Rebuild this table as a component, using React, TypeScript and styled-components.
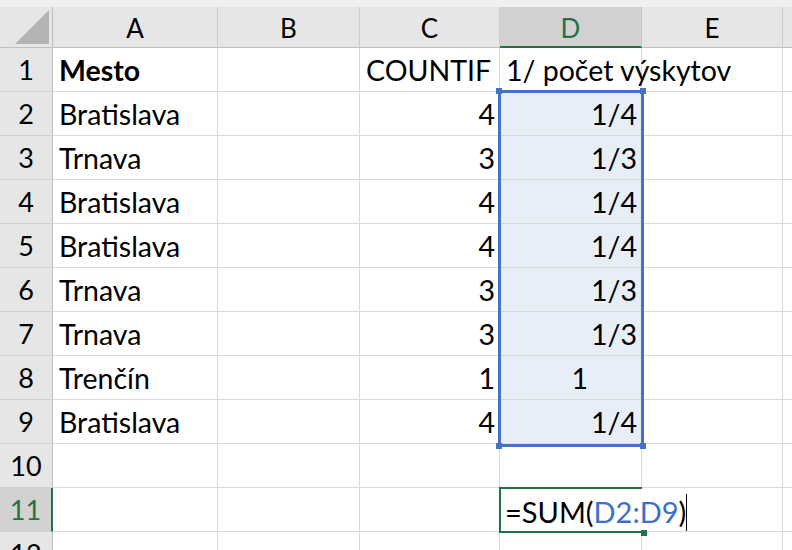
import styled, { createGlobalStyle } from "styled-components";

const GlobalStyle = createGlobalStyle`
  html, body {
    margin: 0;
    padding: 0;
    background: #ffffff;
    overflow: hidden;
  }
  body {
    font-family: Lato, "Open Sans", "Liberation Sans", sans-serif;
  }
`;

const GRID = "#d9d9d9";
const HEAD = "#e6e6e6";
const HEAD_LINE = "#bfbfbf";
const GREEN = "#217346";
const BLUE = "#4472c4";

const columns = ["A", "B", "C", "D", "E", "F"];

interface RowData {
  city?: string;
  count?: string;
  frac?: string;
  bold?: boolean;
}

const rows: RowData[] = [
  { city: "Mesto", count: "COUNTIF", frac: "1/ počet výskytov", bold: true },
  { city: "Bratislava", count: "4", frac: "1/4" },
  { city: "Trnava", count: "3", frac: "1/3" },
  { city: "Bratislava", count: "4", frac: "1/4" },
  { city: "Bratislava", count: "4", frac: "1/4" },
  { city: "Trnava", count: "3", frac: "1/3" },
  { city: "Trnava", count: "3", frac: "1/3" },
  { city: "Trenčín", count: "1", frac: "1" },
  { city: "Bratislava", count: "4", frac: "1/4" },
  {},
  {},
  {},
];

const Page = styled.div`
  width: 792px;
  height: 550px;
  overflow: hidden;
  background: #f0f0f0;
`;

const TopStrip = styled.div`
  height: 7px;
  background: #f0f0f0;
`;

const Sheet = styled.div`
  display: grid;
  grid-template-columns: 53px 165px 142px 140px 142px 141px 1fr;
  grid-template-rows: 41px repeat(12, 44px);
  background: #ffffff;
`;

// every grid item gets its own row/column so overlays don't push cells around
const Placed = styled.div<{ $r: number; $c: number }>`
  grid-row: ${({ $r }) => $r};
  grid-column: ${({ $c }) => $c};
`;

const Corner = styled(Placed)`
  background: ${HEAD};
  border-right: 1px solid ${HEAD_LINE};
  border-bottom: 1px solid ${HEAD_LINE};
  display: flex;
  align-items: flex-end;
  justify-content: flex-end;
  padding: 0 3px 3px 0;
  box-sizing: border-box;
`;

const CornerMark = styled.svg`
  display: block;
`;

const ColHeader = styled(Placed)<{ $active?: boolean }>`
  background: ${({ $active }) => ($active ? "#d2d2d2" : HEAD)};
  border-right: 1px solid ${({ $active }) => ($active ? "#c4c4c4" : "#cdcdcd")};
  border-bottom: ${({ $active }) =>
    $active ? `2px solid ${GREEN}` : `1px solid ${HEAD_LINE}`};
  color: ${({ $active }) => ($active ? GREEN : "#000000")};
  font-size: 26px;
  display: flex;
  align-items: center;
  justify-content: center;
  padding-top: 2px;
  box-sizing: border-box;
`;

const RowHeader = styled(Placed)<{ $active?: boolean }>`
  background: ${({ $active }) => ($active ? "#d2d2d2" : HEAD)};
  border-right: ${({ $active }) =>
    $active ? `2px solid ${GREEN}` : `1px solid ${HEAD_LINE}`};
  border-bottom: 1px solid #cfcfcf;
  color: ${({ $active }) => ($active ? GREEN : "#000000")};
  font-size: 27px;
  display: flex;
  align-items: flex-end;
  justify-content: center;
  padding-bottom: 5px;
  box-sizing: border-box;
`;

const Cell = styled(Placed)<{
  $align?: "left" | "right";
  $bold?: boolean;
  $shade?: boolean;
  $pad?: number;
}>`
  position: relative;
  background: ${({ $shade }) => ($shade ? "#e8eef8" : "#ffffff")};
  border-right: 1px solid ${GRID};
  border-bottom: 1px solid ${GRID};
  font-size: 28.5px;
  font-weight: ${({ $bold }) => ($bold ? 700 : 400)};
  color: #000000;
  display: flex;
  align-items: flex-end;
  justify-content: ${({ $align }) => ($align === "right" ? "flex-end" : "flex-start")};
  padding: 0 ${({ $pad }) => $pad ?? 4}px 4px 6px;
  box-sizing: border-box;
  white-space: nowrap;
  overflow: visible;
  min-width: 0;
`;

const Overflow = styled.span`
  position: relative;
  z-index: 1;
`;

const Selection = styled.div`
  grid-column: 5;
  grid-row: 3 / 11;
  margin: -2px -2px -3px -2px;
  border: 3px solid ${BLUE};
  position: relative;
  pointer-events: none;
  z-index: 2;
`;

const Handle = styled.span<{ $x: "left" | "right"; $y: "top" | "bottom"; $color?: string }>`
  position: absolute;
  width: 6px;
  height: 6px;
  background: ${({ $color }) => $color ?? BLUE};
  ${({ $x }) => $x}: -5px;
  ${({ $y }) => $y}: -5px;
`;

const EditCell = styled.div`
  grid-column: 5;
  grid-row: 12;
  margin: -1px 0 -1px -1px;
  border-top: 2px solid ${GREEN};
  border-bottom: 2px solid ${GREEN};
  border-left: 2px solid ${GREEN};
  position: relative;
  z-index: 3;
  background: #ffffff;
  overflow: visible;
`;

const Formula = styled.div`
  position: absolute;
  left: 4px;
  bottom: 0px;
  background: #ffffff;
  font-size: 29px;
  line-height: 38px;
  white-space: nowrap;
  display: flex;
  align-items: center;
  padding-right: 6px;
`;

const Ref = styled.span`
  color: #3c6fc8;
`;

const Caret = styled.span`
  display: inline-block;
  width: 1px;
  height: 37px;
  background: #000000;
  margin-left: 0;
`;

export default function App() {
  return (
    <Page>
      <GlobalStyle />
      <TopStrip />
      <Sheet>
        <Corner $r={1} $c={1}>
          <CornerMark width="34" height="34" viewBox="0 0 34 34">
            <polygon points="0,34 34,34 34,0" fill="#b4b4b4" />
          </CornerMark>
        </Corner>
        {columns.map((c, ci) => (
          <ColHeader key={c} $r={1} $c={ci + 2} $active={c === "D"}>
            {c === "F" ? "" : c}
          </ColHeader>
        ))}

        {rows.map((r, i) => {
          const n = i + 1;
          const gr = n + 1;
          const inSel = n >= 2 && n <= 9;
          return [
            <RowHeader key={`h${n}`} $r={gr} $c={1} $active={n === 11}>
              {n}
            </RowHeader>,
            <Cell key={`a${n}`} $r={gr} $c={2} $bold={r.bold}>
              {r.city}
            </Cell>,
            <Cell key={`b${n}`} $r={gr} $c={3} />,
            <Cell key={`c${n}`} $r={gr} $c={4} $align={n === 1 ? "left" : "right"}>
              {r.count}
            </Cell>,
            n === 11 ? null : (
              <Cell
                key={`d${n}`}
                $r={gr}
                $c={5}
                $align={n === 1 ? "left" : "right"}
                $shade={inSel}
                $pad={r.frac === "1" ? 53 : 4}
              >
                {n === 1 ? <Overflow>{r.frac}</Overflow> : r.frac}
              </Cell>
            ),
            <Cell key={`e${n}`} $r={gr} $c={6} />,
            <Cell key={`f${n}`} $r={gr} $c={7} />,
          ];
        })}

        <Selection>
          <Handle $x="left" $y="top" />
          <Handle $x="right" $y="top" />
          <Handle $x="left" $y="bottom" />
          <Handle $x="right" $y="bottom" />
        </Selection>

        <EditCell>
          <Formula>
            =SUM(<Ref>D2:D9</Ref>)<Caret />
          </Formula>
          <Handle $x="right" $y="bottom" $color={GREEN} />
        </EditCell>
      </Sheet>
    </Page>
  );
}
